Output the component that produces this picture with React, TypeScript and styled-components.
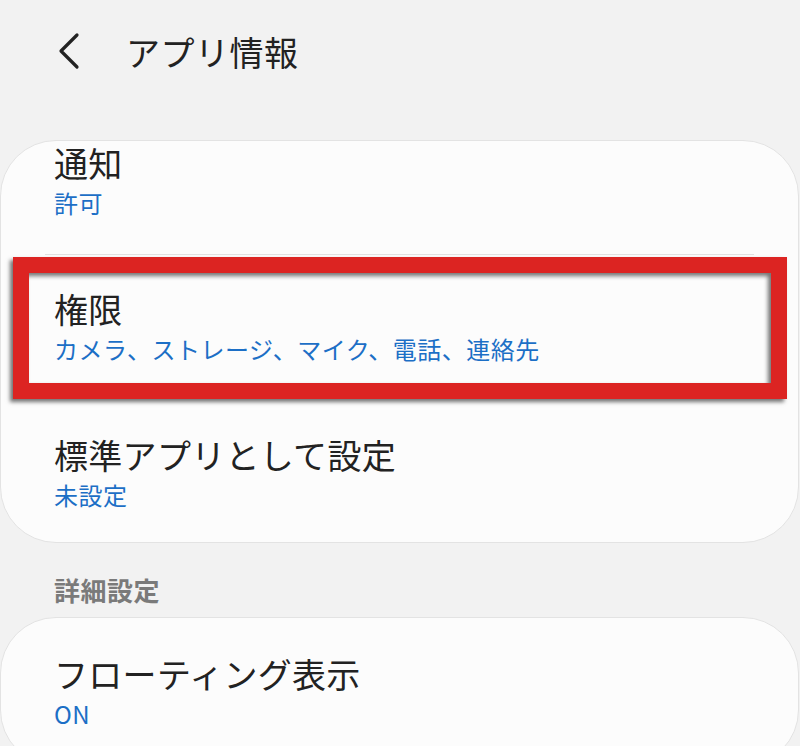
import React from "react";
import styled, { createGlobalStyle } from "styled-components";

const GlobalStyle = createGlobalStyle`
  html, body {
    margin: 0;
    padding: 0;
    background: #f2f2f2;
    font-family: "Noto Sans CJK JP", "Noto Sans", sans-serif;
    overflow: hidden;
  }
`;

const Page = styled.div`
  width: 800px;
  height: 746px;
  background: #f2f2f2;
  overflow: hidden;
  display: flex;
  flex-direction: column;
  & > * {
    flex-shrink: 0;
  }
`;

const Header = styled.header`
  height: 140px;
  display: flex;
  align-items: flex-start;
  padding: 28px 0 0 56px;
  box-sizing: border-box;
  gap: 44px;
`;

const BackButton = styled.div`
  width: 26px;
  height: 42px;
  display: flex;
  align-items: center;
  justify-content: center;
  margin-top: 2px;
`;

const Title = styled.h1`
  margin: 0;
  font-size: 34px;
  line-height: 48px;
  font-weight: 400;
  color: #222;
  letter-spacing: 0.5px;
`;

const Card = styled.section`
  background: #fcfcfc;
  border: 1px solid #e3e3e3;
  border-radius: 56px;
  margin: 0 1px 0 0;
  display: flex;
  flex-direction: column;
`;

const Row = styled.div<{ $top?: number; $bottom?: number }>`
  position: relative;
  padding: ${(p) => p.$top ?? 33}px 56px ${(p) => p.$bottom ?? 36}px 53px;
  display: flex;
  flex-direction: column;
  gap: 4px;
`;

const RowTitle = styled.div`
  font-size: 34px;
  line-height: 42px;
  color: #222;
  letter-spacing: 0.3px;
`;

const RowValue = styled.div`
  font-size: 24px;
  line-height: 30px;
  color: #1c6fc6;
  letter-spacing: 0.5px;
`;

const Divider = styled.div`
  height: 1px;
  background: #e2e2e2;
  margin: 0 44px 0 44px;
`;

const Highlight = styled.div`
  position: absolute;
  top: 2px;
  bottom: 2px;
  left: 12px;
  right: 11px;
  border: 16px solid #dc2422;
  box-shadow: -3px 3px 4px rgba(0, 0, 0, 0.55),
    inset -3px 3px 4px rgba(0, 0, 0, 0.55);
  pointer-events: none;
`;

const SectionLabel = styled.div`
  padding: 32px 0 12px 54px;
  font-size: 26px;
  line-height: 30px;
  font-weight: 700;
  color: #7a7a7a;
  letter-spacing: 0.5px;
`;

const Chevron = () => (
  <svg width="26" height="40" viewBox="0 0 26 40" fill="none">
    <polyline
      points="21,4 5,20 21,36"
      stroke="#222"
      strokeWidth="3.2"
      strokeLinecap="round"
      strokeLinejoin="round"
    />
  </svg>
);

export default function App() {
  return (
    <>
      <GlobalStyle />
      <Page>
        <Header>
          <BackButton>
            <Chevron />
          </BackButton>
          <Title>アプリ情報</Title>
        </Header>
        <Card>
          <Row $top={1}>
            <RowTitle>通知</RowTitle>
            <RowValue>許可</RowValue>
          </Row>
          <Divider />
          <Row $bottom={37}>
            <RowTitle>権限</RowTitle>
            <RowValue>カメラ、ストレージ、マイク、電話、連絡先</RowValue>
            <Highlight />
          </Row>
          <Row $bottom={32}>
            <RowTitle>標準アプリとして設定</RowTitle>
            <RowValue>未設定</RowValue>
          </Row>
        </Card>
        <SectionLabel>詳細設定</SectionLabel>
        <Card>
          <Row $top={35}>
            <RowTitle>フローティング表示</RowTitle>
            <RowValue>ON</RowValue>
          </Row>
        </Card>
      </Page>
    </>
  );
}
